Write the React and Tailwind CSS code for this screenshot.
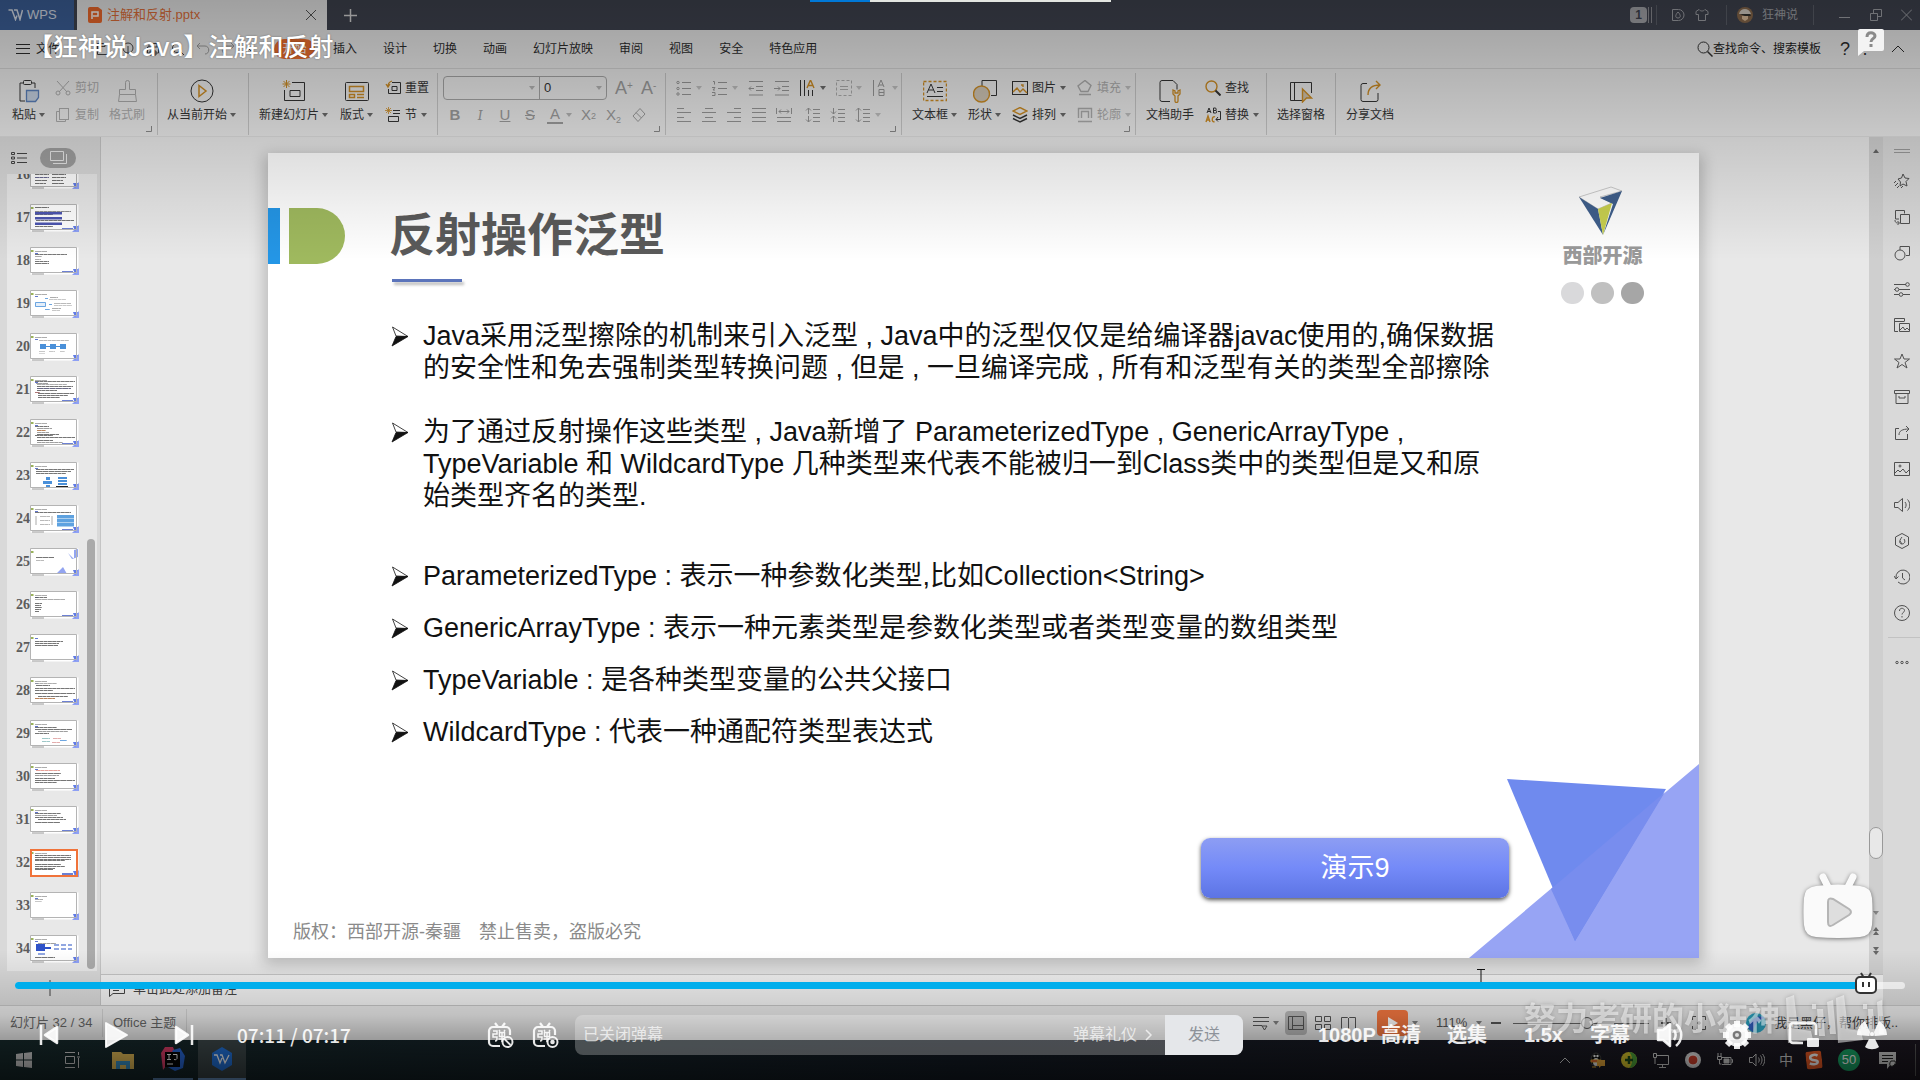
import React from "react";

const Svg = ({ w = 16, h = 16, box, sw = 1, className = "", children }) => (
  <svg
    width={w}
    height={h}
    viewBox={box || `0 0 ${w} ${h}`}
    fill="none"
    stroke="currentColor"
    strokeWidth={sw}
    className={`shrink-0 ${className}`}
    aria-hidden="true"
  >
    {children}
  </svg>
);

const Caret = () => (
  <Svg w={6} h={4} className="opacity-70">
    <path d="M0 0h6L3 4z" fill="currentColor" stroke="none" />
  </Svg>
);

const amber = "#c98a24";

/* ---------- ribbon building blocks ---------- */

const Big = ({ label, caret, dim, children }) => (
  <button className={`flex shrink-0 flex-col items-center gap-[3px] pt-2.5 ${dim ? "text-[#a9a9a9]" : "text-[#333]"}`}>
    {children}
    <span className="flex items-center gap-[3px] whitespace-nowrap text-xs leading-[18px]">
      {label}
      {caret && <Caret />}
    </span>
  </button>
);

const Small = ({ label, caret, dim, children }) => (
  <button className={`flex h-[18px] items-center gap-1 whitespace-nowrap text-xs ${dim ? "text-[#a9a9a9]" : "text-[#333]"}`}>
    {children}
    {label && <span>{label}</span>}
    {caret && <Caret />}
  </button>
);

const Stack = ({ children }) => <div className="flex shrink-0 flex-col items-start gap-[9px] pt-2.5">{children}</div>;

const Group = ({ className, corner, children }) => (
  <div className={`relative flex h-[67px] shrink-0 items-start ${className}`}>
    {children}
    <span className="absolute right-0 top-1 h-[62px] w-px bg-[#c4c4c4]" />
    {corner && (
      <Svg w={6} h={6} className="absolute bottom-1 right-1.5 text-[#888]">
        <path d="M5.5 0v5.5H0" />
      </Svg>
    )}
  </div>
);

const Lines = ({ rows }) => (
  <Svg>
    {rows.map(([x, y, l], i) => (
      <path key={i} d={`M${x} ${y}.5h${l}`} />
    ))}
  </Svg>
);

const Ribbon = () => (
  <div className="flex h-[68px] shrink-0 overflow-hidden border-b border-[#dcdcdc] bg-[#e9e9e9] text-[#333]">
    <Group className="w-[158px] gap-[10px] pl-3" corner>
      <Big label="粘贴" caret>
        <Svg w={24} h={24}>
          <path d="M6 4H3v18h5M15 4h3v5" />
          <rect x="6.5" y="1.5" width="8" height="4" rx="1" />
          <path d="M9.5 11.5h12v7l-3 4h-9z" fill="#c3cfdf" stroke="#5a7fb8" strokeWidth="1.3" />
        </Svg>
      </Big>
      <Stack>
        <Small label="剪切" dim>
          <Svg>
            <path d="M2 1l10 11M14 1L4 12" />
            <circle cx="3" cy="13" r="2" />
            <circle cx="13" cy="13" r="2" />
          </Svg>
        </Small>
        <Small label="复制" dim>
          <Svg>
            <rect x="4.5" y="1.5" width="9" height="11" />
            <path d="M4 4.5H1.5v10h9V13" />
          </Svg>
        </Small>
      </Stack>
      <Big label="格式刷" dim>
        <Svg w={24} h={24}>
          <path d="M10.5 10.5v-7a2 2 0 0 1 4 0v7h6v5h-16v-5zM4.5 15.5l-1 7h18l-1-7" />
        </Svg>
      </Big>
    </Group>
    <Group className="w-[91px] pl-[9px]">
      <Big label="从当前开始" caret>
        <Svg w={24} h={24}>
          <circle cx="12" cy="12" r="11" />
          <path d="M9 6.5v11l7-5.5z" stroke={amber} strokeWidth="1.5" />
        </Svg>
      </Big>
    </Group>
    <Group className="w-[189px] gap-3 pl-[10px]">
      <Big label="新建幻灯片" caret>
        <Svg w={24} h={24}>
          <path d="M10 3.5h12.5v18h-20V11M8 11.5h10v6H8z" />
          <path d="M4.5 1v8M.5 5h8M1.5 2l6 6M7.5 2l-6 6" stroke={amber} />
        </Svg>
      </Big>
      <Big label="版式" caret>
        <Svg w={24} h={24}>
          <rect x=".5" y="3.5" width="23" height="18" rx="1" />
          <path d="M4.5 7.5h14v5h-14zM4.5 15.5h5v3h-5zM12 15.5h7M12 18.5h7" stroke={amber} strokeWidth="1.5" />
        </Svg>
      </Big>
      <Stack>
        <Small label="重置">
          <Svg>
            <path d="M7 2.5h8.5v11h-12V9M7 6.5h5v4H7z" />
            <path d="M1 4l2 3 2-3M3 6c0-3 1-4 4-5" stroke={amber} strokeWidth="1.3" />
          </Svg>
        </Small>
        <Small label="节" caret>
          <Svg>
            <path d="M8 3.5h7M3.5 9.5h10v5h-10zM8 6.5h7" />
            <path d="M3.5 0v7M0 3.5h7M1 1l5 5M6 1L1 6" stroke={amber} strokeWidth=".8" />
          </Svg>
        </Small>
      </Stack>
    </Group>
    <Group className="w-[228px] pl-[5px]" corner>
      <div className="flex flex-col gap-1.5 pt-[7px] text-[#9a9a9a]">
        <div className="flex h-6 items-center gap-2">
          <div className="flex h-6 w-[164px] items-center rounded border border-[#a3a3a3]">
            <button aria-label="字体" className="flex h-full w-[96px] items-center justify-end border-r border-[#a3a3a3] pr-1">
              <Caret />
            </button>
            <input aria-label="字号" defaultValue="0" className="w-[56px] bg-transparent pl-1 text-[13px] text-[#333] outline-none" />
            <Caret />
          </div>
          <button className="flex w-[18px] items-start text-lg leading-6">A<sup className="top-1 text-[10px] leading-3">+</sup></button>
          <button className="flex w-[18px] items-start text-lg leading-6">A<sup className="top-1 text-[10px] leading-3">-</sup></button>
        </div>
        <div className="flex h-[18px] items-center gap-[9px] pl-1 text-[15px] leading-[18px]">
          <button className="w-4 font-bold">B</button>
          <button className="w-4 font-serif italic">I</button>
          <button className="w-4 underline">U</button>
          <button className="w-4 line-through">S</button>
          <button className="flex w-[25px] items-center gap-[3px]">
            <span className="w-4 border-b-2 border-current leading-4">A</span>
            <Caret />
          </button>
          <button className="flex w-4">X<sup className="top-1 text-[9px] leading-3">2</sup></button>
          <button className="flex w-4 items-end">X<sub className="text-[9px] leading-3">2</sub></button>
          <button aria-label="清除格式">
            <Svg>
              <path d="M9 1.5l5 5.5-7 7.5-5-5.5zM5 5.5l5.5 5.5" />
            </Svg>
          </button>
        </div>
      </div>
    </Group>
    <Group className="w-[236px] pl-2.5" corner>
      <div className="flex flex-col gap-[9px] pt-2.5 text-[#959595]">
        <div className="flex h-[18px] items-center gap-2.5">
          <Small dim caret>
            <Svg className="text-[#959595]">
              <path d="M6 2.5h9M6 8.5h9M6 14.5h9" />
              <circle cx="2" cy="2.5" r="1.2" />
              <circle cx="2" cy="8.5" r="1.2" />
              <circle cx="2" cy="14" r="1.2" />
            </Svg>
          </Small>
          <Small dim caret>
            <Svg className="text-[#959595]">
              <path d="M6 2.5h9M6 8.5h9M6 14.5h9M1 1.5h1.5v3M0 7.5h3l-2 2.5h2M0 12.5h3v3H0" />
            </Svg>
          </Small>
          <Svg>
            <path d="M1 1.5h14M8 6.5h7M8 10.5h7M1 15h14M6 8.5H1l2-2M1 8.5l2 2" />
          </Svg>
          <Svg>
            <path d="M1 1.5h14M8 6.5h7M8 10.5h7M1 15h14M0 8.5h6l-2-2M6 8.5l-2 2" />
          </Svg>
          <Small caret>
            <Svg>
              <path d="M.5 0v16M4.5 0v16M8.5 10v6M12.5 10v6" />
              <path d="M7 8l3.500-8L14 8M8 5.5h5" stroke={amber} strokeWidth="1.4" />
            </Svg>
          </Small>
          <Small dim caret>
            <Svg>
              <rect x=".5" y=".5" width="15" height="15" strokeDasharray="3 2" />
              <path d="M4 6.5h8M4 9.5h8" />
            </Svg>
          </Small>
          <Small dim caret>
            <Svg className="text-[#959595]">
              <path d="M1.5 0v16M6 7l3-7 3 7M7 5h4M7 9.5h5v6H7zM7 12.5h5" />
            </Svg>
          </Small>
        </div>
        <div className="flex h-[18px] items-center gap-[9px]">
          <Lines rows={[[1, 1, 7], [1, 5, 14], [1, 10, 7], [1, 14, 14]]} />
          <Lines rows={[[4, 1, 8], [1, 5, 14], [4, 10, 8], [1, 14, 14]]} />
          <Lines rows={[[8, 1, 7], [1, 5, 14], [8, 10, 7], [1, 14, 14]]} />
          <Lines rows={[[1, 1, 14], [1, 5, 14], [1, 10, 14], [1, 14, 14]]} />
          <Svg>
            <path d="M.5 1v6M15.5 1v6M3 4.5h10M5 2.500l-2 2 2 2M11 2.500l2 2-2 2M1 10.5h14M1 14.5h14" />
          </Svg>
          <Svg className="ml-1">
            <path d="M8 2.5h7M8 6.5h7M8 10.5h7M8 14.5h7M3.5 7V1M1 3.5L3.5 1 6 3.5M3.5 9v6M1 12.5L3.5 15 6 12.5" />
          </Svg>
          <Svg>
            <path d="M8 2.5h7M8 6.5h7M8 10.5h7M8 14.5h7M3.5 1v6M1 4.5L3.5 7 6 4.5M3.5 15V9M1 11.5L3.5 9 6 11.5" />
          </Svg>
          <Small dim caret>
            <Svg className="text-[#959595]">
              <path d="M8 2.5h7M8 6.5h7M8 10.5h7M8 14.5h7M3.5 1v14M1 3.5L3.5 1 6 3.5M1 12.5L3.5 15 6 12.5" />
            </Svg>
          </Small>
        </div>
      </div>
    </Group>
    <Group className="w-[234px] gap-[11px] pl-[10px]" corner>
      <Big label="文本框" caret>
        <Svg w={24} h={24}>
          <rect x=".5" y="2.5" width="23" height="19" stroke={amber} strokeDasharray="3 2" strokeWidth="1.5" />
          <path d="M4 14l4-9 4 9M5.5 11h5M14 8.5h6M14 12.5h6M4 17.5h16" />
        </Svg>
      </Big>
      <Big label="形状" caret>
        <Svg w={24} h={24}>
          <path d="M9 7V1.5h14.5v15H18" />
          <circle cx="8.5" cy="15" r="8" stroke={amber} fill="#cdc3b3" strokeWidth="1.4" />
        </Svg>
      </Big>
      <Stack>
        <Small label="图片" caret>
          <Svg>
            <rect x=".5" y="1.5" width="15" height="13" />
            <path d="M1 12l4-4 3 4 3-3 4 4M9 5h2v2" stroke={amber} strokeWidth="1.4" />
          </Svg>
        </Small>
        <Small label="排列" caret>
          <Svg>
            <path d="M8 .5l7 3.500-7 3.500L1 4z" stroke={amber} strokeWidth="1.4" />
            <path d="M1 8l7 3.500L15 8M1 11.5L8 15l7-3.500" strokeWidth="1.4" />
          </Svg>
        </Small>
      </Stack>
      <Stack>
        <Small label="填充" caret dim>
          <Svg>
            <path d="M4 3.5L8 .5l6 5-3 6H4L1 6zM2 14.5h12" strokeWidth="1.4" />
          </Svg>
        </Small>
        <Small label="轮廓" caret dim>
          <Svg>
            <path d="M1.5 11V1.5h13V11M4.5 11V4.5h7V11M1 14.5h14" strokeWidth="1.4" />
          </Svg>
        </Small>
      </Stack>
    </Group>
    <Group className="w-[131px] gap-[11px] pl-[10px]">
      <Big label="文档助手">
        <Svg w={24} h={24}>
          <path d="M12 22.5H4a2 2 0 0 1-2-2v-17a2 2 0 0 1 2-2h11l4 4v5" />
          <path d="M15 11v4l2 2v5a1.5 1.5 0 0 0 3 0v-5l2-2v-4l-2 1v2h-3v-2z" stroke={amber} strokeWidth="1.3" />
        </Svg>
      </Big>
      <Stack>
        <Small label="查找">
          <Svg>
            <circle cx="6.5" cy="6.5" r="5.5" stroke={amber} strokeWidth="1.4" />
            <path d="M10.5 10.5l5 5" strokeWidth="2" />
          </Svg>
        </Small>
        <Small label="替换" caret>
          <Svg>
            <path d="M2 6l2-5 2 5M3 4.5h2.500M8.5 1v5h2a1.2 1.2 0 0 0 0-2.500h-2 1.500a1.2 1.2 0 0 0 0-2.500zM13 4.5h2.500v8H11M13 10l-2 2.500 2 2" />
            <path d="M1 15l2-6 2 6M2 13h2.500M10 10c-3-2-4 6-.5 4.500" stroke={amber} strokeWidth="1.4" />
          </Svg>
        </Small>
      </Stack>
    </Group>
    <Group className="w-[69px] pl-[10px]">
      <Big label="选择窗格">
        <Svg w={24} h={24}>
          <path d="M13 21.5H1.5v-18h21V14M5.5 4v17" />
          <path d="M13.5 10l9 9h-5l-4 4z" stroke={amber} fill="#cfc0a8" strokeWidth="1.4" />
        </Svg>
      </Big>
    </Group>
    <div className="flex items-start pl-[10px]">
      <Big label="分享文档">
        <Svg w={24} h={24}>
          <path d="M9 4.5H5a2 2 0 0 0-2 2v14a2 2 0 0 0 2 2h13a2 2 0 0 0 2-2V14" />
          <path d="M10 16c0-6 3-10 12-10M18 2l4 4-4 4" stroke={amber} strokeWidth="1.4" />
        </Svg>
      </Big>
    </div>
  </div>
);

/* ---------- title and menu bars ---------- */

const TitleBar = () => (
  <header className="flex h-[30px] shrink-0 items-center bg-[#3f434f] text-[#a0a2a8]">
    <button className="mr-[3px] flex h-full w-[74px] items-center gap-1 bg-[#3c6099] pl-2 text-[13px] text-white/80">
      <Svg w={15} h={12} sw={1.5}>
        <path d="M.5 1h3.500l3.500 9.500L9 6.500M6 1h3l3 9.500L14.500 1" />
      </Svg>
      WPS
    </button>
    <div className="flex h-full w-[250px] items-center bg-[#ebebeb] pl-[11px] pr-2.5 text-[13px] text-[#e2703a]">
      <Svg w={14} h={16} className="mr-[5px]">
        <path d="M0 2a2 2 0 0 1 2-2h8l4 3v11a2 2 0 0 1-2 2H2a2 2 0 0 1-2-2z" fill="#f06a2c" stroke="none" />
        <path d="M4 12V5h6v4H5" stroke="#fff" strokeWidth="1.5" />
      </Svg>
      <span>注解和反射.pptx</span>
      <button aria-label="关闭标签" className="ml-auto text-[#555]">
        <Svg w={12} h={12}>
          <path d="M1 1l10 10M11 1L1 11" />
        </Svg>
      </button>
    </div>
    <button aria-label="新建" className="ml-[17px] text-[#d8d8d8]">
      <Svg w={13} h={13} sw={1.5}>
        <path d="M6.5 0v13M0 6.5h13" />
      </Svg>
    </button>
    <div className="ml-auto flex items-center pr-2">
      <span className="flex h-4 w-[17px] items-center justify-center rounded-sm bg-[#a5a6ab] text-xs font-bold text-[#3f434f]">1</span>
      <span className="ml-px h-4 w-1 border-x border-[#8c8d93]" />
      <span className="ml-1 h-5 w-px bg-[#5b5f69]" />
      <Svg w={14} h={14} className="ml-3.5">
        <path d="M1.5 1.5h6a5.5 5.5 0 0 1 0 11h-6zM7 4c-3 3-3 6 0 6s3-3 0-6z" />
      </Svg>
      <Svg w={14} h={14} className="ml-[10px]">
        <path d="M4 1.5L1 3.5v3h2.500v6h7v-6H13v-3l-3-2c-1.500 2-4.500 2-6 0z" />
      </Svg>
      <span className="ml-[17px] h-5 w-px bg-[#5b5f69]" />
      <Svg w={16} h={16} className="ml-[10px]">
        <circle cx="8" cy="8" r="8" fill="#8a6a4c" stroke="none" />
        <path d="M2 7c1-6 10-7 12 0z" fill="#d7d0c5" stroke="none" />
        <path d="M3 7h10l1 2H8z" fill="#30302c" stroke="none" />
        <path d="M5 9h6v3l-3 2-3-2z" fill="#e0c09c" stroke="none" />
      </Svg>
      <span className="ml-[9px] text-xs">狂神说</span>
      <span className="ml-[15px] h-5 w-px bg-[#5b5f69]" />
      <button aria-label="最小化" className="ml-[25px]"><Svg w={11} h={12}><path d="M0 8.5h11" /></Svg></button>
      <button aria-label="还原" className="ml-[20px]"><Svg w={12} h={12}><path d="M.5 4.5h7v7h-7zM3.5 4V.5h8v7H8" /></Svg></button>
      <button aria-label="关闭" className="ml-[19px]"><Svg w={11} h={12}><path d="M0 .5l11 11M11 .5l-11 11" /></Svg></button>
    </div>
  </header>
);

const MenuBar = () => (
  <nav className="flex h-[39px] shrink-0 items-center border-b border-[#d2d2d2] bg-[#e9e9e9] text-xs text-[#2c2c2c]">
    <button className="flex items-center gap-1.5 pl-4">
      <Svg w={14} h={12}><path d="M0 1.5h14M0 5.5h14M0 10.5h14" /></Svg>
      文件
    </button>
    <div className="ml-9 flex items-center gap-[11px] text-[#444]">
      <Svg w={14} h={14}><path d="M1.5 1.5h9l2 2v9h-11zM4 1.5v3h5v-3" /></Svg>
      <Svg w={14} h={14}><circle cx="7" cy="6" r="5" /><path d="M7 4v8" /></Svg>
      <Svg w={14} h={14}><path d="M3 5V1.5h8V5M1.5 5h11v6h-11zM4 9h6v4H4z" /></Svg>
      <Svg w={14} h={14}><circle cx="6" cy="6" r="4.5" /><path d="M9 9l4 4" /></Svg>
      <Svg w={14} h={14} className="text-[#999]"><path d="M1 4h8c5 0 5 8 0 8M4 1L1 4l3 3" /></Svg>
      <Svg w={14} h={14} className="text-[#999]"><path d="M13 4H5c-5 0-5 8 0 8M10 1l3 3-3 3" /></Svg>
      <Svg w={10} h={14}><path d="M1 5l4 4 4-4" /></Svg>
    </div>
    <button className="ml-[18px] flex h-5 w-[41px] items-center justify-center rounded-full bg-[#f0702f] text-white">开始</button>
    <div className="ml-[18px] flex gap-[26px] whitespace-nowrap">
      {["插入", "设计", "切换", "动画", "幻灯片放映", "审阅", "视图", "安全", "特色应用"].map((t) => (
        <button key={t}>{t}</button>
      ))}
    </div>
    <div className="ml-auto flex items-center pr-[15px]">
      <Svg w={16} h={16} className="text-[#333]"><circle cx="6.5" cy="6.5" r="5.5" /><path d="M10.5 10.5l5 5" strokeWidth="1.5" /></Svg>
      <input aria-label="搜索" placeholder="查找命令、搜索模板" className="w-[112px] bg-transparent text-xs outline-none placeholder:text-[#222]" />
      <button aria-label="帮助" className="ml-[15px] text-lg leading-5">?</button>
      <span className="ml-[7px] w-4 text-center text-base leading-5">⋮</span>
      <button aria-label="收起功能区" className="ml-[18px]"><Svg w={14} h={8}><path d="M1 7l6-6 6 6" /></Svg></button>
    </div>
  </nav>
);

/* ---------- thumbnails ---------- */

const K = "#555";
const B = "#3b56c4";
const S = "#4a90d9";
const T = [[5, 4, 12, "#999"], [5, 6, 3, B]];
const text = (rows) => rows.map(([x, y, w, c]) => [x, y, w, c || K]);
const slides = [
  [16, text([[5, 10, 14], [22, 10, 10], [5, 13, 14], [22, 13, 14], [5, 16, 14, "#447"], [22, 16, 14], [5, 19, 12], [22, 19, 11], [5, 22, 11], [22, 22, 12]])],
  [17, text([[5, 3, 14], [5, 7, 36, "#777"], [5, 10, 18], [5, 14, 12], [6, 16, 38], [5, 22, 18]]), 1, "bands"],
  [18, text([...T, [5, 7, 32], [5, 9, 7, "#999"], [5, 12, 6, "#999"], [5, 14, 14], [5, 16, 14]]), 1],
  [19, text([...T, [15, 8, 3, S], [20, 7, 8, "#999"], [19, 9, 17, "#bbb"], [19, 14, 3, S], [24, 13, 17, "#aaa"], [24, 15, 18, "#bbb"], [15, 19, 5, S], [22, 18, 9, "#999"], [22, 20, 8, "#bbb"]]), 0, "outline"],
  [20, text([...T, [9, 7, 30, "#aaa"], [9, 18, 6, "#bbb"], [19, 18, 6, "#bbb"], [30, 18, 5, "#bbb"], [9, 20, 6, "#ccc"]]), 0, "boxes"],
  [21, text([...T, [5, 5, 40], [6, 7, 12, "#888"], [7, 8, 30, "#999"], [7, 10, 36], [7, 12, 34, "#446"], [7, 14, 20], [5, 16, 5, "#955"], [8, 17, 36], [8, 19, 30], [8, 21, 22]]), 1],
  [22, text([...T, [5, 7, 14], [7, 9, 15, "#888"], [7, 11, 9, "#a63"], [7, 13, 12, "#888"], [7, 15, 22], [5, 16, 18], [7, 18, 38], [7, 21, 16], [7, 23, 26, "#888"]]), 1],
  [23, text([...T, [6, 7, 38], [6, 9, 35], [6, 11, 30]]), 0, "tree"],
  [24, text([...T, [5, 7, 36], [10, 11, 10, "#aaa"], [10, 15, 10, "#aaa"], [10, 19, 10, "#aaa"]]), 1, "panel"],
  [25, text([[6, 9, 18], [6, 12, 8, "#aaa"]]), 0, "cover"],
  [26, text([...T, [5, 6, 12], [5, 8, 30, "#999"], [5, 12, 7], [5, 14, 6], [5, 16, 7], [5, 18, 6], [5, 20, 4]]), 1],
  [27, text([[5, 4, 3, B], [5, 7, 28], [5, 9, 24], [5, 11, 23]])],
  [28, text([...T, [5, 6, 22, "#999"], [6, 8, 14], [5, 11, 40], [5, 13, 18], [5, 16, 40], [8, 19, 30], [5, 21, 20, "#a63"]]), 1],
  [29, text([...T, [5, 7, 22], [5, 9, 37], [8, 11, 30, "#888"], [5, 13, 14], [12, 18, 8, "#8bb"], [23, 18, 8, "#d99"], [12, 21, 8, "#8bb"], [30, 20, 7, S], [22, 22, 8, "#d99"]])],
  [30, text([...T, [6, 7, 24, "#e08a80"], [5, 10, 26], [5, 12, 24, "#888"], [5, 15, 20], [5, 17, 40], [5, 19, 22]])],
  [31, text([...T, [5, 7, 26], [5, 9, 22, "#888"], [5, 11, 28], [8, 13, 28], [5, 16, 25]]), 1],
  [32, text([...T, [5, 6, 36], [5, 8, 36], [5, 10, 36], [5, 11, 30], [5, 15, 26], [5, 17, 30], [5, 19, 20], [5, 20, 18]]), 1],
  [33, text([...T, [5, 7, 8, "#999"], [5, 9, 7, "#bbb"]])],
  [34, text([...T, [8, 8, 18, "#888"], [5, 22, 20]]), 0, "flow"],
];

const Thumb = ({ rows, demo, art, active }) => (
  <svg width="49" height="28" viewBox="0 0 49 28" aria-hidden="true" className="shrink-0">
    <rect x=".5" y=".5" width="48" height="27" fill="#fff" stroke="none" />
    <rect x="1" y="3" width="2.5" height="2" fill="#9ab35b" />
    {rows.map(([x, y, w, c], i) => (
      <path key={i} d={`M${x} ${y}.5h${w}`} stroke={c} strokeDasharray={i % 3 ? "4 .3" : "6 .3"} opacity=".8" />
    ))}
    {art === "bands" && <path d="M5 8h27v2.500H5zM5 13h27v2.500H5zM5 18.500h27v2.500H5z" fill="#4c55b0" />}
    {art === "outline" && <path d="M5.5 12.5h10v4h-10z" fill="#e3eefa" stroke={S} strokeWidth=".8" />}
    {art === "boxes" && <path d="M10 11h6v5h-6zM20 11h6v5h-6zM30 11h6v5h-6zM16 13h4v1h-4zM26 13h4v1h-4z" fill={S} />}
    {art === "tree" && <path d="M16 15h4v3h-4zM13 19h9v3h-9zM16 23h4v2h-4zM28 15h9v2h-9zM28 18h9v2h-9zM28 21h9v2h-9z" fill={S} />}
    {art === "tree" && <path d="M26 24h12v2H26z" fill="#222" />}
    {art === "panel" && <path d="M27 10h17v3.500H27zM27 14h17v3.500H27zM27 18h17v3.500H27z" fill="#5ea2e0" />}
    {art === "panel" && <path d="M6 11v9M22 11v9" stroke="#aaa" />}
    {art === "cover" && <path d="M38 5l6 6V2l4-1v8l-6 2zM26 26l7-7 4 7z" fill="#92a4f0" />}
    {art === "flow" && <path d="M6 9h9v7H6zM15 12h6v2h-6z" fill="#2f52c8" />}
    {art === "flow" && <path d="M24 10h5M31 10h5M38 10h4M24 14h5M31 14h5M38 14h4M8 19h7" stroke="#6f8ad8" strokeWidth="1.5" />}
    {demo ? <path d="M32 25h11" stroke={B} strokeWidth="1.5" /> : null}
    <path d="M42 28l7-7v7z" fill="#8ea0f4" />
    <path d="M43 22h5l-3 5z" fill="#5f7ae6" />
    <path d="M2 27h12" stroke="#999" />
    {active ? (
      <rect x="1" y="1" width="46" height="26" fill="none" stroke="#f0733a" strokeWidth="2" />
    ) : (
      <path d="M.5 25.5V.5h46v25z" fill="none" stroke="#b4b4b4" />
    )}
  </svg>
);

const LeftPanel = () => (
  <aside className="flex w-[101px] shrink-0 flex-col border-r border-[#c4c4c4] bg-[#d9d9d9]">
    <div className="flex h-[37px] shrink-0 items-center gap-[13px] pl-[11px] pt-1">
      <button aria-label="大纲" className="text-[#444]">
        <Svg w={16} h={12}>
          <path d="M.5.5h3v2h-3zM.5 5h3v2h-3zM.5 9.5h3v2h-3zM6 1.5h10M6 6h10M6 10.5h10" />
        </Svg>
      </button>
      <button aria-label="幻灯片" className="flex h-5 w-9 items-center justify-center rounded-full bg-[#9d9d9d] text-[#e6e6e6]">
        <Svg w={17} h={13}><path d="M.5.5h13v9H.5zM3 12.5h13.500V3" /></Svg>
      </button>
    </div>
    <div className="ml-[7px] mr-[3px] flex min-h-0 flex-1 overflow-hidden bg-[#e8e8e8]">
      <ol className="flex h-full w-[80px] flex-col justify-end pb-px">
        {slides.map(([n, rows, demo, art]) => (
          <li key={n} className="h-[43px] shrink-0">
            <button className="flex h-full w-full items-center pl-[9px] text-left font-['Liberation_Serif'] text-sm font-bold text-[#5c5c5c]">
              <span className="w-[14px] whitespace-nowrap">{n}</span>
              <Thumb rows={rows} demo={demo} art={art} active={n === 32} />
            </button>
          </li>
        ))}
      </ol>
      <span className="mb-0.5 h-[430px] w-2 self-end rounded-full bg-[#aaa]" />
    </div>
    <button aria-label="新建幻灯片" className="flex h-[34px] shrink-0 items-center justify-center text-[#444]">
      <Svg w={16} h={16}><path d="M8 0v16M0 8h16" /></Svg>
    </button>
  </aside>
);

/* ---------- slide ---------- */

const Item = ({ children, className = "" }) => (
  <li className={`flex gap-[14px] whitespace-nowrap ${className}`}>
    <Svg w={18} h={22} className="mt-1.5">
      <path d="M1.5 1L17 10.500 5 10z" strokeWidth=".8" />
      <path d="M17 10.5L1 20 5 10.500z" fill="currentColor" strokeWidth=".8" />
    </Svg>
    <p>{children}</p>
  </li>
);

const Slide = () => (
  <article className="relative mb-4 ml-[167px] mr-[170px] mt-4 flex min-w-0 flex-1 flex-col overflow-hidden bg-white">
    <svg className="absolute bottom-0 right-0" width="230" height="194" viewBox="0 0 230 194" aria-hidden="true">
      <path d="M0 194L230 0v194z" fill="#97a4f4" />
      <path d="M38 15l159 10-91 152z" fill="#6f8aee" />
      <path d="M82 125L196 28l-90 149z" fill="#788dee" />
    </svg>
    <header className="flex h-[167px] shrink-0 items-start justify-between">
      <div className="flex items-start pt-[55px]">
        <span className="h-14 w-3 bg-[#2496e6]" />
        <span className="ml-[9px] h-14 w-[56px] rounded-r-[28px] bg-[#9fb95e]" />
        <div className="ml-[44px]">
          <h1 className="text-[46px] font-bold leading-[54px] text-[#5a5a5a]">反射操作泛型</h1>
          <div className="ml-[3px] mt-[17px] h-[3px] w-[70px] bg-[#5b74bb] shadow-[2px_3px_3px_#bbb]" />
        </div>
      </div>
      <div className="mr-[55px] flex flex-col items-center pt-[33px]">
        <svg width="46" height="50" viewBox="0 0 46 50" aria-hidden="true" className="mr-1">
          <path d="M1 11L33 1l11 4-22 6 12 6-14 6z" fill="#fff" stroke="#aaa" strokeWidth=".6" />
          <path d="M1 11l19 12 5 26z" fill="#3f5f8c" />
          <path d="M44 5L25 49l10-31-13-6z" fill="#3f5f8c" />
          <path d="M20 23l14-6-9 32z" fill="#c9d04f" />
        </svg>
        <span className="mt-2 text-xl font-black leading-6 text-[#999]">西部开源</span>
        <div className="mt-3.5 flex gap-[7px]">
          <span className="h-[22px] w-[23px] rounded-full bg-[#d9d9db]" />
          <span className="h-[22px] w-[23px] rounded-full bg-[#c0c0c0]" />
          <span className="h-[22px] w-[23px] rounded-full bg-[#a6a6a6]" />
        </div>
      </div>
    </header>
    <ul className="pl-[123px] text-[27px] leading-8 text-[#111]">
      <Item>
        Java采用泛型擦除的机制来引入泛型 , Java中的泛型仅仅是给编译器javac使用的,确保数据
        <br />
        的安全性和免去强制类型转换问题 , 但是 , 一旦编译完成 , 所有和泛型有关的类型全部擦除
      </Item>
      <Item className="mt-8">
        为了通过反射操作这些类型 , Java新增了 ParameterizedType , GenericArrayType ,
        <br />
        TypeVariable 和 WildcardType 几种类型来代表不能被归一到Class类中的类型但是又和原
        <br />
        始类型齐名的类型.
      </Item>
      <Item className="mt-12">ParameterizedType : 表示一种参数化类型,比如Collection&lt;String&gt;</Item>
      <Item className="mt-5">GenericArrayType : 表示一种元素类型是参数化类型或者类型变量的数组类型</Item>
      <Item className="mt-5">TypeVariable : 是各种类型变量的公共父接口</Item>
      <Item className="mt-5">WildcardType : 代表一种通配符类型表达式</Item>
    </ul>
    <button className="ml-[933px] mt-[90px] h-[60px] w-[308px] shrink-0 rounded-[9px] bg-linear-to-b from-[#8d9df3] via-[#748af8] to-[#5c74e4] text-[27px] text-white shadow-[0_2px_4px_#555]">
      演示9
    </button>
    <footer className="ml-[25px] mt-[22px] whitespace-pre text-lg leading-6 text-[#8a8a8a]">版权：西部开源-秦疆　禁止售卖，盗版必究</footer>
  </article>
);

const Canvas = () => (
  <div className="flex min-h-0 flex-1 bg-[#e8e8e8]">
    <div className="relative flex min-w-0 flex-1 overflow-hidden">
      <div className="absolute bottom-4 left-[167px] right-[170px] top-5 shadow-[0_2px_14px_4px_rgba(0,0,0,0.2)]" />
      <Slide />
    </div>
    <div className="flex w-[14px] shrink-0 flex-col items-center bg-[#cfcfcf] text-[#666]">
      <Svg w={6} h={4} className="mt-3"><path d="M0 4h6L3 0z" fill="currentColor" stroke="none" /></Svg>
      <span className="mt-auto h-8 w-[14px] rounded-full border border-[#999] bg-[#e8e8e8]" />
      <div className="mt-[52px] flex flex-col items-center gap-3 pb-[19px]">
        <Caret />
        <Svg w={6} h={8}><path d="M0 4h6L3 0zM0 8h6L3 4z" fill="currentColor" stroke="none" /></Svg>
        <Svg w={6} h={8}><path d="M0 0h6L3 4zM0 4h6L3 8z" fill="currentColor" stroke="none" /></Svg>
      </div>
    </div>
  </div>
);

const toolIcons = [
  ["动画", <path key="a" d="M9 1l2 4 4 .5-3 3 1 4.500-4-2-3 2 .5-4L4 6l3.500-1zM2 8l-2 2M4 10l-3 3M5 13l-2 2M9 13l-2 2" />],
  ["切换", <path key="a" d="M5 10H1.500v-8.500h9v3M6.500 5.500h9v9h-9zM1 11c0 3 2 3 4 3M3.500 12l2 2-2 2" />],
  ["形状", <g key="a"><path d="M6 5V1.500h9.500v9H12" /><circle cx="6" cy="10" r="5" /></g>],
  ["设置", <g key="a"><path d="M0 3.500h12M5 8.500h11M0 13.500h5M9 13.500h7M0 8.500h1" /><circle cx="13.5" cy="3.5" r="1.8" /><circle cx="3" cy="8.5" r="1.8" /><circle cx="7" cy="13.5" r="1.8" /></g>],
  ["素材", <path key="a" d="M4 14.500H.5v-13h10V4M.5 4.500h10M5.500 6.500h10v8h-10zM6 13l3-3 2 3 2-2 2 2" />],
  ["收藏", <path key="a" d="M8 1l2 5h5.500l-4.500 3.500 2 5.500-5-3.500L3 15l2-5.500L.5 6H6z" />],
  ["归档", <path key="a" d="M.5 1.500h15v3H.5zM2 4.500v10h12v-10M5 7v2h6V7" />],
  ["分享", <path key="a" d="M5 3.500H1.500v11h12V9M5 10c0-4 3-6 10-6M12 1l3 3-3 3" />],
  ["图片", <g key="a"><path d="M.5 1.500h15v13H.5zM1 12l3-3 2 2 3-3 3 4 3-3" /><circle cx="6" cy="5" r="1" /></g>],
  ["声音", <path key="a" d="M.5 5.500H4L8.500 1.500v13L4 10.500H.5zM11 5c1.500 2 1.500 4 0 6M13.500 2.500c3 3 3 8 0 11" />],
  ["安全", <path key="a" d="M8 .5l6.500 3.500v8L8 15.500 1.500 12V4zM8 4c-4 5-2 7 0 7s4-2 2-5M6 8l2 3" />],
  ["历史", <path key="a" d="M2 9a7 7 0 1 1 2 4M0 7l2 3 2.500-2.500M8.500 4v5l2.500 2" />],
  ["帮助", <g key="a"><circle cx="8" cy="8" r="7.5" /><path d="M5.500 6c0-4 5-3 5-.5 0 2-2.500 2-2.500 4M8 11v1.500" /></g>],
];

const ToolRail = () => (
  <aside className="flex w-[37px] shrink-0 flex-col items-center bg-[#d9d9d9] text-[#505050]">
    <span className="mt-[12px] h-1 w-4 border-y border-[#999]" />
    <div className="mt-5 flex flex-col gap-5">
      {toolIcons.map(([name, icon]) => (
        <button key={name} aria-label={name} className="flex h-4 w-4">
          <Svg>{icon}</Svg>
        </button>
      ))}
    </div>
    <span className="mt-4 h-px w-8 self-end bg-[#c2c2c2]" />
    <button aria-label="更多" className="mt-[22px] flex">
      <Svg w={14} h={5}><circle cx="2" cy="2.5" r="1.2" /><circle cx="7" cy="2.5" r="1.2" /><circle cx="12" cy="2.5" r="1.2" /></Svg>
    </button>
  </aside>
);

/* ---------- bottom bars ---------- */

const StatusBar = () => (
  <div className="flex h-[35px] shrink-0 items-center border-t border-[#c4c4c4] bg-[#e6e6e6] text-xs text-[#666]">
    <span className="w-[102px] whitespace-nowrap pl-2.5 text-[13px]">幻灯片 32 / 34</span>
    <span className="flex h-7 w-[85px] items-center border-x border-[#cfcfcf] pl-2.5 text-[13px]">Office 主题</span>
    <div className="ml-auto flex items-center text-[#555]">
      <Svg w={16} h={14}><path d="M0 1.500h16M0 5.500h16M0 9.500h9M9 10h5l-2.500 4z" /></Svg>
      <span className="ml-1"><Caret /></span>
      <button aria-label="普通视图" className="ml-1.5 flex h-6 w-[22px] items-center justify-center rounded bg-[#b5b5b5]"><Svg w={16} h={14}><path d="M.5.5h15v13H.5zM4.500 1v12M5 9.500h10" /></Svg></button>
      <button aria-label="幻灯片浏览" className="ml-2"><Svg w={16} h={14}><path d="M.5.5h6v5h-6zM9.500.5h6v5h-6zM.5 8.500h6v5h-6zM9.500 8.500h6v5h-6z" /></Svg></button>
      <button aria-label="阅读视图" className="ml-2.5"><Svg w={15} h={14}><path d="M.5 12.500v-11h6l1 1 1-1h6v11M7.500 2v11" /></Svg></button>
      <button aria-label="放映" className="ml-[21px] flex h-[26px] w-[31px] items-center justify-center rounded bg-[#f0753f]"><Svg w={12} h={14}><path d="M1 1l10 6-10 6z" fill="#fff" stroke="none" /></Svg></button>
      <span className="ml-1"><Caret /></span>
      <span className="ml-[18px] w-9 text-[13px]">111%</span>
      <span className="ml-1"><Caret /></span>
      <button aria-label="缩小" className="ml-[9px]"><Svg w={10} h={4} sw={2}><path d="M0 2h10" /></Svg></button>
      <div className="relative ml-3 flex h-4 w-[136px] items-center">
        <span className="h-px w-full bg-[#666]" />
        <span className="absolute left-1/2 h-3 w-3 rounded-full border border-[#555] bg-[#ddd]" />
        <input type="range" aria-label="缩放" min="10" max="200" defaultValue="111" className="absolute inset-0 w-full opacity-0" />
      </div>
      <button aria-label="放大" className="ml-3"><Svg w={10} h={10} sw={2}><path d="M0 5h10M5 0v10" /></Svg></button>
      <Svg w={14} h={14} className="ml-[21px]"><path d="M.5 4V.5H4M10 .5h3.500V4M.5 10v3.500H4M10 13.500h3.500V10M7 5v4M5 7h4" /></Svg>
      <Svg w={22} h={22} className="ml-[39px]">
        <circle cx="11" cy="11" r="10" fill="#2ca9c8" stroke="none" />
        <path d="M3 16C5 6 14 2 20 6 14 8 9 12 8 20z" fill="#3566d0" stroke="none" />
      </Svg>
      <span className="ml-[7px] w-[146px] whitespace-nowrap text-[13px] text-[#444]">我是黑仔，帮你排版..</span>
    </div>
  </div>
);

const Taskbar = () => (
  <div className="flex h-10 shrink-0 items-center bg-linear-to-r from-[#16292b] via-[#131b24] to-[#1c1720] pr-1 text-[#cfcfcf]">
    <button aria-label="开始" className="ml-4"><Svg w={16} h={16}><path d="M0 2l7-1v6.500H0zM8 1l8-1v7.500H8zM0 8.500h7V15l-7-1zM8 8.500h8V16l-8-1z" fill="currentColor" stroke="none" /></Svg></button>
    <button aria-label="任务视图" className="ml-8"><Svg w={16} h={16}><path d="M1 .5h10M1 15.500h10M1.500 4.500h9v7h-9zM14.500 0v3M14.500 6v10M13 5h3" /></Svg></button>
    <button aria-label="文件资源管理器" className="ml-8"><Svg w={22} h={18}><path d="M0 1h9l2 2h11v15H0z" fill="#e3bb57" stroke="none" /><path d="M4 18v-8h14v8h-4v-4H8v4z" fill="#3a93c8" stroke="none" /></Svg></button>
    <button aria-label="IntelliJ" className="ml-[19px] flex h-10 w-10 items-center justify-center border-b-2 border-[#5b86b5]">
      <Svg w={24} h={24}>
        <path d="M0 6L4 0h8l2 5-9 14-3 4-1-8z" fill="#dd3d68" stroke="none" />
        <path d="M12 3l7-2 5 8-2 12-8 3-9-5z" fill="#2868d8" stroke="none" />
        <rect x="4" y="5" width="15" height="15" fill="#050505" stroke="none" />
        <path d="M6 7.500h4M8 7.500v5M6 12.500h4M12 7.500h4v4q-1 2-3 1M6 17h6" stroke="#fff" />
      </Svg>
    </button>
    <button aria-label="WPS" className="ml-[5px] flex h-10 w-12 items-center justify-center border-b-2 border-[#6d9acb] bg-[#3b4648]">
      <Svg w={22} h={24}><path d="M11 0l10 6v12l-10 6-10-6V6z" fill="#2273dc" stroke="none" /><path d="M3 8h3l3 8 2-5M9 8h2l3 8 4-8" stroke="#fff" strokeWidth="1.3" /></Svg>
    </button>
    <div className="ml-auto flex items-center">
      <Svg w={12} h={8} className="mr-[18px]"><path d="M1 7l5-5 5 5" /></Svg>
      <Svg w={16} h={16} className="mr-4">
        <ellipse cx="7" cy="8" rx="5" ry="7" fill="#0b0b0b" stroke="#444" />
        <ellipse cx="7" cy="10" rx="3" ry="4" fill="#eee" stroke="none" />
        <circle cx="5.5" cy="4" r="1.2" fill="#fff" stroke="none" /><circle cx="8.5" cy="4" r="1.2" fill="#fff" stroke="none" />
        <path d="M2 8h10v2H2zM3 15h4" fill="#d33" stroke="#e6a72c" />
        <path d="M8 8h8v6h-4l-2 2v-2H8z" fill="#e9a93b" stroke="none" />
      </Svg>
      <Svg w={16} h={16} className="mr-4"><circle cx="8" cy="8" r="8" fill="#d8c62d" stroke="none" /><path d="M8 0a8 8 0 0 1 0 16c4-3 4-13 0-16z" fill="#4ea63b" stroke="none" /><path d="M8 4v8M4 8h8" stroke="#1b4d1b" strokeWidth="2.5" /></Svg>
      <Svg w={16} h={16} className="mr-4"><path d="M4 3.500h11.500v9H4M.5 1.500h3v4h-3zM2 6v6M9.500 13v2.500M6 15.500h7" /></Svg>
      <Svg w={16} h={16} className="mr-4"><circle cx="8" cy="8" r="8" fill="#ddd" stroke="none" /><circle cx="8" cy="8" r="5" fill="#d2402c" stroke="#fff" /></Svg>
      <Svg w={16} h={16} className="mr-4"><path d="M4 5.500h10v7H5M14.500 7.500h1v3h-1M1 1v3M4 1v3M.5 4.500h4v3h-4zM2.500 8v4h2" /><path d="M7 7h5v4H7z" fill="currentColor" /></Svg>
      <Svg w={16} h={16} className="mr-[14px]"><path d="M.5 5.500h3L7 2v12l-3.500-3.500h-3zM9.500 5.500c1 2 1 3 0 5M11.500 3.500c2 3 2 6 0 9M13.500 2c3 4 3 8 0 12" /></Svg>
      <span className="mr-[13px] text-sm">中</span>
      <Svg w={16} h={18} className="mr-4 -rotate-6"><rect width="16" height="18" rx="3" fill="#ea5a24" stroke="none" /><path d="M12 5C9 3 4 4 4.500 7s7 1.500 7 4-5 3-8 1" stroke="#fff" strokeWidth="2.5" /></Svg>
      <span className="mr-[19px] flex h-[22px] w-[22px] items-center justify-center rounded-full bg-[#18a566] text-[13px] text-white">50</span>
      <Svg w={17} h={17} className="mr-[19px]"><path d="M0 0h17v12h-5l-4 5v-5H0z" fill="currentColor" stroke="none" /><path d="M3 3.500h11M3 6.500h11M3 9.500h6" stroke="#222" /><path d="M12 9c-3 4 0 6 2 5s3-3 2-5z" fill="#ddd" stroke="#222" /></Svg>
      <span className="h-8 w-px bg-[#555]" />
    </div>
  </div>
);

/* ---------- video player layer ---------- */

const DanmakuIcon = ({ kind }) => (
  <Svg w={27} h={27} sw={2.2}>
    <path d="M8 1l3 4M18 1l-3 4M23 13V9a4 4 0 0 0-4-4H6a4 4 0 0 0-4 4v11a4 4 0 0 0 4 4h7" />
    <path d="M6 9h4v3H6v3h4c0 3 0 4-2 4M12 8l1 1.500M18 8l-1 1.500M12.500 10.500h5v4h-5zM15 10.500V20M11.500 17h6" strokeWidth="1.5" />
    <circle cx="20.5" cy="20" r="5" strokeWidth="2" />
    {kind === "off" ? <path d="M17.500 17l6 6" strokeWidth="1.8" /> : <circle cx="20.5" cy="20" r="1.2" />}
  </Svg>
);

const PlayerTop = () => (
  <div className="pointer-events-none absolute inset-x-0 top-0 h-[260px] bg-linear-to-b from-black/32 via-black/15 to-transparent">
    <div className="mx-auto flex h-0.5 w-[301px] bg-[#e3e6e1]">
      <span className="w-[60px] bg-[#0078d7]" />
    </div>
    <h2 className="absolute left-7 top-[27px] whitespace-nowrap font-['Noto_Sans_CJK_SC'] text-[25px] font-medium leading-9 text-white [text-shadow:0_0_2px_rgba(0,0,0,0.4)]">【狂神说Java】注解和反射</h2>
    <svg className="absolute right-9 top-[29px]" width="26" height="27" viewBox="0 0 26 27" aria-hidden="true">
      <path d="M0 2a2 2 0 0 1 2-2h22a2 2 0 0 1 2 2v18a2 2 0 0 1-2 2H6l-6 5z" fill="#f3f3f3" />
      <path d="M9 8c0-6 8-5 8-1 0 3-4 2-4 6M13 15v3" fill="none" stroke="#8a8a8a" strokeWidth="3" />
    </svg>
  </div>
);

const PlayerBottom = () => (
  <div className="absolute inset-x-0 bottom-0 flex h-[130px] flex-col bg-linear-to-b from-transparent via-black/16 to-black/60">
    <div className="absolute bottom-[34px] right-[32px] flex items-end text-white/50 drop-shadow-[0_0_2px_rgba(0,0,0,0.4)]">
      <span className="whitespace-nowrap pb-1 text-[32px] font-bold leading-[46px]">努力考研的小狂神</span>
      <svg width="104" height="54" viewBox="0 0 104 54" aria-hidden="true" className="ml-1" fill="currentColor">
        <path d="M2 6l8-3 4 34 13 2 2 9-25 3zM52 6l8-3 4 34 13 2 2 9-25 3z" />
        <path d="M33 17h6l2 27h-6zM43 10l6-2 3 34h-6zM84 17h5l2 27h-6zM93 10l5-2 2 34h-5zM28 12h4v5h-4zM79 12h4v5h-4z" />
      </svg>
    </div>
    <div className="relative mx-[15px] mt-8 flex h-[7px] shrink-0 rounded-full bg-white/60">
      <span className="h-full w-[98%] rounded-l-full bg-[#00aeec]" />
      <svg width="24" height="24" viewBox="0 0 24 24" aria-hidden="true" className="absolute -top-2.5 right-[27px]" fill="#fff" stroke="#333" strokeWidth="2">
        <path d="M7 1l3 5M17 1l-3 5" />
        <rect x="2" y="5" width="20" height="16" rx="4" />
        <path d="M9 10v5M15 10v5" />
      </svg>
      <input type="range" aria-label="播放进度" min="0" max="437" defaultValue="431" className="absolute inset-0 w-full opacity-0" />
    </div>
    <div className="relative mt-[26px] flex h-10 shrink-0 items-center text-white/90">
      <button aria-label="上一个" className="ml-[39px]"><Svg w={20} h={20} sw={2.5}><path d="M2 0v20M18 2v16L6 10z" fill="currentColor" strokeLinejoin="round" /></Svg></button>
      <button aria-label="播放" className="ml-[45px]"><Svg w={25} h={28} sw={2}><path d="M2 2v24l21-12z" fill="currentColor" strokeLinejoin="round" /></Svg></button>
      <button aria-label="下一个" className="ml-[45px]"><Svg w={20} h={20} sw={2.5}><path d="M18 0v20M2 2v16l12-8z" fill="currentColor" strokeLinejoin="round" /></Svg></button>
      <span className="ml-[43px] w-[250px] whitespace-nowrap font-['Noto_Sans_CJK_SC'] text-[19px] font-medium">07:11 / 07:17</span>
      <button aria-label="弹幕开关"><DanmakuIcon kind="off" /></button>
      <button aria-label="弹幕设置" className="ml-[18px]"><DanmakuIcon /></button>
      <div className="ml-4 flex h-10 min-w-0 flex-1 overflow-hidden rounded-lg bg-white/25">
        <input aria-label="弹幕" placeholder="已关闭弹幕" className="min-w-0 flex-1 bg-transparent pl-2 text-base outline-none placeholder:text-white/70" />
        <a href="#etiquette" className="flex items-center gap-2 pr-3 text-base text-white/70">
          弹幕礼仪
          <Svg w={8} h={12} sw={1.5}><path d="M1 1l5 5-5 5" /></Svg>
        </a>
        <button className="w-[78px] bg-[#e5e7ea] text-base text-[#8d9299]">发送</button>
      </div>
      <div className="ml-[75px] flex items-center whitespace-nowrap text-xl font-bold">
        <button className="w-[129px] text-left">1080P 高清</button>
        <button className="w-[77px] text-left">选集</button>
        <button className="w-[66px] text-left">1.5x</button>
        <button className="w-[66px] text-left">字幕</button>
        <button aria-label="音量" className="w-[66px]">
          <Svg w={28} h={28} sw={2.5}><path d="M2 9h5l7-6v22l-7-6H2z" fill="currentColor" strokeLinejoin="round" /><path d="M18 9c2 3 2 7 0 10M20 3c7 6 7 16 0 22" /></Svg>
        </button>
        <button aria-label="设置" className="w-[66px]">
          <Svg w={30} h={30} sw={1}>
            <circle cx="15" cy="15" r="8" strokeWidth="7" />
            <path d="M15 1v6M15 23v6M1 15h6M23 15h6M5 5l4 4M21 21l4 4M25 5l-4 4M9 21l-4 4" strokeWidth="6" />
            <circle cx="15" cy="15" r="4" fill="#777" stroke="none" />
            <circle cx="15" cy="15" r="2" fill="#ddd" stroke="none" />
          </Svg>
        </button>
        <button aria-label="画中画" className="w-[69px]">
          <Svg w={32} h={28} sw={2.5}><path d="M15 22H5a3 3 0 0 1-3-3V5a3 3 0 0 1 3-3h20a3 3 0 0 1 3 3v9" /><rect x="19" y="17" width="12" height="9" rx="1" fill="currentColor" stroke="none" /></Svg>
        </button>
        <button aria-label="全屏" className="w-[63px]">
          <Svg w={30} h={30}><path d="M0 15C0 9 4 3 8 1l5 11-1 4zM30 15c0-6-4-12-8-14l-5 11 1 4zM12 19h6l4 8c-4 3-10 3-14 0z" fill="currentColor" stroke="none" /><circle cx="15" cy="14" r="2" fill="currentColor" stroke="none" /></Svg>
        </button>
      </div>
    </div>
  </div>
);

export default function App() {
  return (
    <div className="relative flex h-screen min-h-[900px] flex-col overflow-hidden bg-[#e8e8e8] font-['Liberation_Sans','Noto_Sans_CJK_SC',sans-serif]">
      <TitleBar />
      <MenuBar />
      <Ribbon />
      <main className="flex min-h-0 flex-1">
        <LeftPanel />
        <div className="flex min-w-0 flex-1 flex-col">
          <Canvas />
          <div className="flex h-[31px] shrink-0 items-center gap-2 border-t border-[#c4c4c4] bg-[#f0f0f0] pb-0.5 pl-2 text-[13px] text-[#444]">
            <Svg w={16} h={15}><path d="M.5 1.500h15v10H4l-3.500 3zM4 5.500h8M4 8.500h6" /></Svg>
            单击此处添加备注
          </div>
        </div>
        <ToolRail />
      </main>
      <StatusBar />
      <Taskbar />
      <PlayerTop />
      <PlayerBottom />
      <svg className="absolute bottom-[96px] right-[433px]" width="12" height="16" viewBox="0 0 12 16" fill="none" stroke="#111" aria-hidden="true">
        <path d="M2 1.500h8M6 1.500V14" />
      </svg>
      <button aria-label="播放视频" className="absolute bottom-[140px] right-[46px] drop-shadow-[0_1px_2px_rgba(0,0,0,0.5)]">
        <svg width="72" height="68" viewBox="0 0 72 68" aria-hidden="true">
          <path d="M21 5l5 10M51 5l-5 10" stroke="#fafafa" strokeWidth="7" strokeLinecap="round" />
          <path d="M14 14q22-3 44 0 11 1 12 12 1 14 0 27-1 11-12 12-22 2-44 0Q3 64 2 53q-1-13 0-27 1-11 12-12z" fill="#fafafa" />
          <path d="M26 30q0-5 5-3l16 10q4 3 0 6L31 53q-5 3-5-3z" fill="#dedede" stroke="#b5b5b5" strokeWidth="2" />
        </svg>
      </button>
    </div>
  );
}
